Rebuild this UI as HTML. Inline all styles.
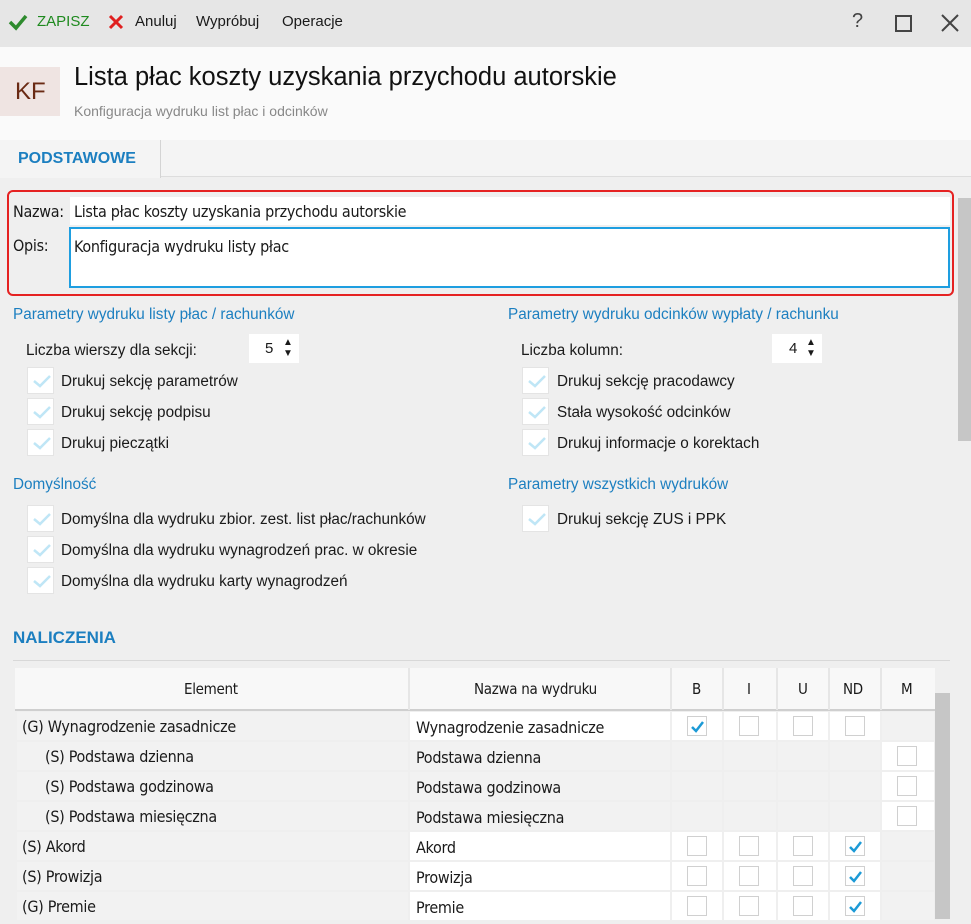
<!DOCTYPE html>
<html><head><meta charset="utf-8"><style>
*{box-sizing:border-box;margin:0;padding:0}
body{width:971px;height:919px;overflow:hidden;background:#efefef;font-family:"Liberation Sans",sans-serif;font-size:15px;color:#1a1a1a;position:relative}
.a{position:absolute}
.tb{left:0;top:0;width:971px;height:47px;background:#e6e6e6}
.hd{left:0;top:47px;width:971px;height:93px;background:#fafafa}
.blue{color:#1c7fc0}
.cb{position:absolute;width:27px;height:27px;background:#fff;border:1px solid #e4e4e4}
.cb svg{position:absolute;left:4px;top:5px}
.lbl{position:absolute;font-size:15.3px}
.tbl{font-family:"DejaVu Sans Condensed","Liberation Sans",sans-serif;font-stretch:condensed;font-size:16px;letter-spacing:-0.3px}
.cell{position:absolute;height:28px;line-height:30px;padding-left:6px;white-space:nowrap}
.sq{position:absolute;width:20px;height:20px;background:#fff;border:1px solid #d0d0d0}
</style></head><body>
<div class="a tb"></div>
<svg class="a" style="left:8px;top:13px" width="20" height="18"><path d="M2 9 L8 15 L18 3" stroke="#2e8b2e" stroke-width="3.5" fill="none"/></svg>
<div class="a" style="left:37px;top:13px;color:#1f8a1f;font-size:15px">ZAPISZ</div>
<svg class="a" style="left:108px;top:14px" width="16" height="16"><path d="M2 2L14 14M14 2L2 14" stroke="#e02020" stroke-width="3"/></svg>
<div class="a" style="left:135px;top:13px">Anuluj</div>
<div class="a" style="left:196px;top:13px">Wypróbuj</div>
<div class="a" style="left:282px;top:13px">Operacje</div>
<div class="a" style="left:852px;top:10px;font-size:20px;color:#444">?</div>
<div class="a" style="left:895px;top:15px;width:17px;height:17px;border:2px solid #444"></div>
<svg class="a" style="left:941px;top:14px" width="18" height="18"><path d="M1 1L17 17M17 1L1 17" stroke="#444" stroke-width="2"/></svg>
<div class="a hd"></div>
<div class="a" style="left:0;top:67px;width:60px;height:49px;background:#efe4e2;color:#6a2a14;font-size:24px;line-height:49px;padding-left:15px">KF</div>
<div class="a" style="left:74px;top:63px;font-size:25.5px;color:#111">Lista płac koszty uzyskania przychodu autorskie</div>
<div class="a" style="left:74px;top:103px;font-size:14px;color:#888">Konfiguracja wydruku list płac i odcinków</div>
<div class="a" style="left:0;top:140px;width:971px;height:37px;background:#f4f4f4;border-bottom:1px solid #ddd"></div>
<div class="a" style="left:0;top:140px;width:161px;height:38px;background:#f4f4f4;border-right:1px solid #d4d4d4;color:#1c7fc0;font-weight:bold;font-size:16px;line-height:38px;padding-left:18px">PODSTAWOWE</div>
<div class="a" style="left:958px;top:198px;width:13px;height:243px;background:#c6c6c6"></div>
<div class="a" style="left:7px;top:190px;width:947px;height:106px;border:2px solid #e52222;border-radius:6px"></div>
<div class="a" style="left:70px;top:197px;width:880px;height:28px;background:#fff"></div>
<div class="lbl tbl" style="left:13px;top:202px;font-size:16px">Nazwa:</div>
<div class="lbl tbl" style="left:74px;top:202px;font-size:16px">Lista płac koszty uzyskania przychodu autorskie</div>
<div class="a" style="left:69px;top:227px;width:881px;height:61px;background:#fff;border:2px solid #1e9ee0"></div>
<div class="lbl tbl" style="left:13px;top:236px;font-size:16px">Opis:</div>
<div class="lbl tbl" style="left:74px;top:237px;font-size:16px">Konfiguracja wydruku listy płac</div>

<div class="lbl blue" style="left:13px;top:306px">Parametry wydruku listy płac / rachunków</div>
<div class="lbl" style="left:26px;top:342px">Liczba wierszy dla sekcji:</div>
<div class="a" style="left:249px;top:334px;width:50px;height:29px;background:#fff;text-align:left;padding:6px 0 0 16px">5</div>
<div class="a" style="left:283px;top:337px;font-size:10px;line-height:11px">▲<br>▼</div>
<div class="cb" style="left:27px;top:367px"><svg width="20" height="16"><path d="M2 8L8 13L18 3" stroke="#bfe6f6" stroke-width="2.5" fill="none"/></svg></div>
<div class="lbl" style="left:61px;top:373px">Drukuj sekcję parametrów</div>
<div class="cb" style="left:27px;top:398px"><svg width="20" height="16"><path d="M2 8L8 13L18 3" stroke="#bfe6f6" stroke-width="2.5" fill="none"/></svg></div>
<div class="lbl" style="left:61px;top:404px">Drukuj sekcję podpisu</div>
<div class="cb" style="left:27px;top:429px"><svg width="20" height="16"><path d="M2 8L8 13L18 3" stroke="#bfe6f6" stroke-width="2.5" fill="none"/></svg></div>
<div class="lbl" style="left:61px;top:435px">Drukuj pieczątki</div>

<div class="lbl blue" style="left:508px;top:306px">Parametry wydruku odcinków wypłaty / rachunku</div>
<div class="lbl" style="left:521px;top:342px">Liczba kolumn:</div>
<div class="a" style="left:772px;top:334px;width:50px;height:29px;background:#fff;padding:6px 0 0 17px">4</div>
<div class="a" style="left:806px;top:337px;font-size:10px;line-height:11px">▲<br>▼</div>
<div class="cb" style="left:522px;top:367px"><svg width="20" height="16"><path d="M2 8L8 13L18 3" stroke="#bfe6f6" stroke-width="2.5" fill="none"/></svg></div>
<div class="lbl" style="left:557px;top:373px">Drukuj sekcję pracodawcy</div>
<div class="cb" style="left:522px;top:398px"><svg width="20" height="16"><path d="M2 8L8 13L18 3" stroke="#bfe6f6" stroke-width="2.5" fill="none"/></svg></div>
<div class="lbl" style="left:557px;top:404px">Stała wysokość odcinków</div>
<div class="cb" style="left:522px;top:429px"><svg width="20" height="16"><path d="M2 8L8 13L18 3" stroke="#bfe6f6" stroke-width="2.5" fill="none"/></svg></div>
<div class="lbl" style="left:557px;top:435px">Drukuj informacje o korektach</div>

<div class="lbl blue" style="left:13px;top:476px">Domyślność</div>
<div class="cb" style="left:27px;top:505px"><svg width="20" height="16"><path d="M2 8L8 13L18 3" stroke="#bfe6f6" stroke-width="2.5" fill="none"/></svg></div>
<div class="lbl" style="left:61px;top:511px">Domyślna dla wydruku zbior. zest. list płac/rachunków</div>
<div class="cb" style="left:27px;top:536px"><svg width="20" height="16"><path d="M2 8L8 13L18 3" stroke="#bfe6f6" stroke-width="2.5" fill="none"/></svg></div>
<div class="lbl" style="left:61px;top:542px">Domyślna dla wydruku wynagrodzeń prac. w okresie</div>
<div class="cb" style="left:27px;top:567px"><svg width="20" height="16"><path d="M2 8L8 13L18 3" stroke="#bfe6f6" stroke-width="2.5" fill="none"/></svg></div>
<div class="lbl" style="left:61px;top:573px">Domyślna dla wydruku karty wynagrodzeń</div>
<div class="lbl blue" style="left:508px;top:476px">Parametry wszystkich wydruków</div>
<div class="cb" style="left:522px;top:505px"><svg width="20" height="16"><path d="M2 8L8 13L18 3" stroke="#bfe6f6" stroke-width="2.5" fill="none"/></svg></div>
<div class="lbl" style="left:557px;top:511px">Drukuj sekcję ZUS i PPK</div>

<div class="a" style="left:13px;top:628px;color:#1c7fc0;font-weight:bold;font-size:17px">NALICZENIA</div>
<div class="a" style="left:13px;top:660px;width:937px;height:1px;background:#d8d8d8"></div>

<div class="tbl" style="font-size:15px">
<div class="a" style="left:15px;top:668px;width:920px;height:43px;background:#f8f8f8;border-bottom:2px solid #cfcfcf"></div>
<div class="a" style="left:408px;top:668px;width:2px;height:42px;background:#e6e6e6"></div>
<div class="a" style="left:670px;top:668px;width:2px;height:42px;background:#e6e6e6"></div>
<div class="a" style="left:722px;top:668px;width:2px;height:42px;background:#e6e6e6"></div>
<div class="a" style="left:776px;top:668px;width:2px;height:42px;background:#e6e6e6"></div>
<div class="a" style="left:828px;top:668px;width:2px;height:42px;background:#e6e6e6"></div>
<div class="a" style="left:880px;top:668px;width:2px;height:42px;background:#e6e6e6"></div>
<div class="a" style="left:184px;top:680px">Element</div>
<div class="a" style="left:474px;top:680px">Nazwa na wydruku</div>
<div class="a" style="left:692px;top:680px">B</div>
<div class="a" style="left:747px;top:680px">I</div>
<div class="a" style="left:798px;top:680px">U</div>
<div class="a" style="left:843px;top:680px">ND</div>
<div class="a" style="left:901px;top:680px">M</div>
<div class="a" style="left:935px;top:693px;width:15px;height:226px;background:#c6c6c6"></div>
</div>
<div class="tbl" id="rows"></div>
<script>
var rows=[["(G) Wynagrodzenie zasadnicze",0,[1,0,0,0,null]],["(S) Podstawa dzienna",1,[null,null,null,null,0]],["(S) Podstawa godzinowa",1,[null,null,null,null,0]],["(S) Podstawa miesięczna",1,[null,null,null,null,0]],["(S) Akord",0,[0,0,0,1,null]],["(S) Prowizja",0,[0,0,0,1,null]],["(G) Premie",0,[0,0,0,1,null]]];
var xs=[672,724,778,830,882],ws=[50,52,50,50,52],h="";
rows.forEach(function(r,i){var y=712+i*30;
h+='<div class="cell" style="left:17px;top:'+y+'px;width:391px;background:#f2f2f2;padding-left:'+(r[1]?28:5)+'px">'+r[0]+'</div>';
h+='<div class="cell" style="left:410px;top:'+y+'px;width:260px;background:'+(r[1]?'#f2f2f2':'#fff')+';line-height:32px">'+r[0].replace(/^\(.\) /,'')+'</div>';
r[2].forEach(function(v,j){h+='<div class="cell" style="left:'+xs[j]+'px;top:'+y+'px;width:'+ws[j]+'px;background:'+(v===null?'#f2f2f2':'#fff')+'"></div>';
if(v!==null){h+='<div class="sq" style="left:'+(xs[j]+15)+'px;top:'+(y+4)+'px">'+(v?'<svg width="18" height="18" style="position:absolute;left:0;top:0"><path d="M4 10L8 14L15 5" stroke="#1c9ad6" stroke-width="2.5" fill="none"/></svg>':'')+'</div>';}});
});
document.getElementById('rows').innerHTML=h;
</script>
</body></html>
